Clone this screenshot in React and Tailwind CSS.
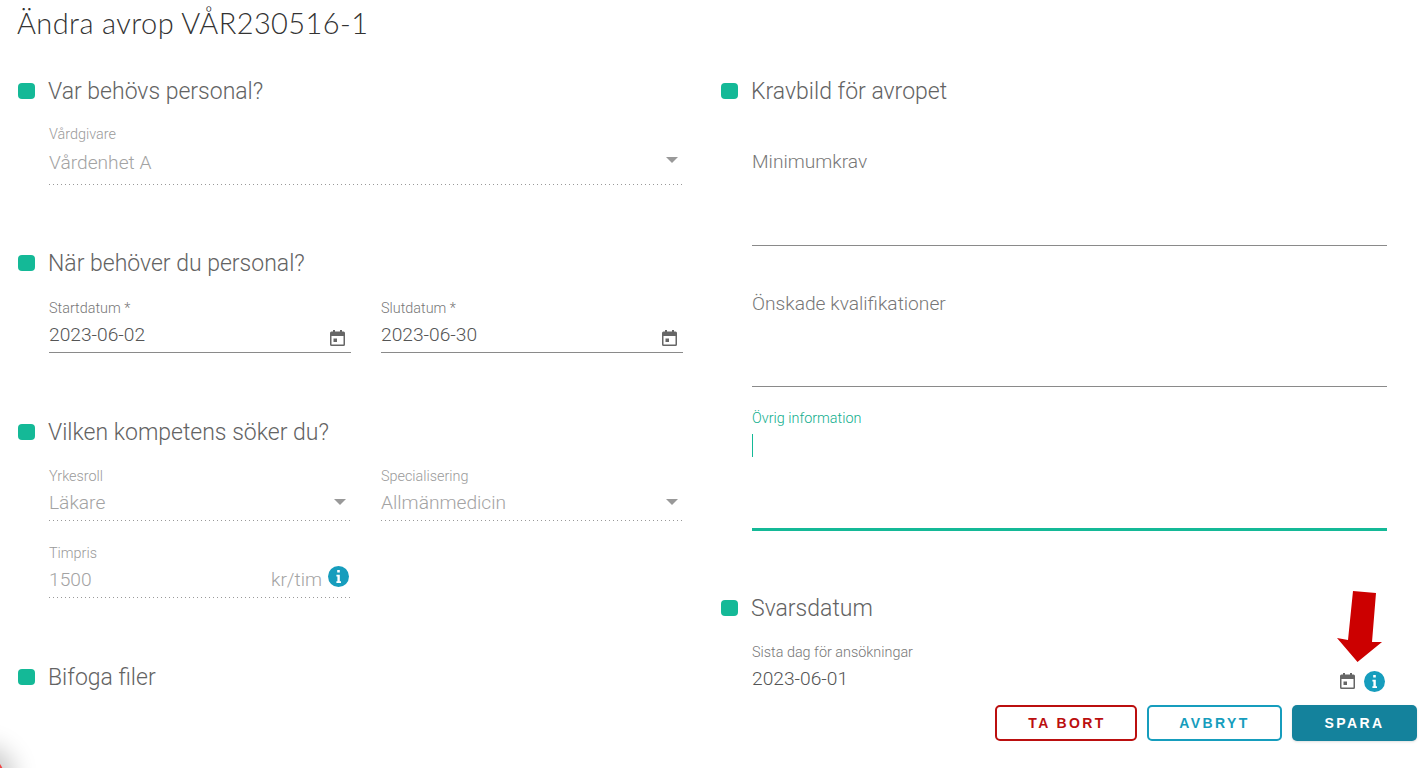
import clsx from "clsx";

const Heading = ({ children, className = "" }) => (
    <div className={`flex items-center h-[32px] ${className}`}>
        <span className="w-[17px] h-[16px] rounded-[4px] bg-[#14b997] shrink-0" />
        <h2 className="ml-[13px] pt-[2px] text-[23px] leading-[32px] font-light text-[#636363]">{children}</h2>
    </div>
);

const CalendarIcon = () => (
    <svg width="15" height="16" viewBox="0 0 15 16" className="text-[#666]">
        <path
            fill="currentColor"
            d="M3 0h2v1.500h5V0h2v1.500h1.500A1.500 1.500 0 0 1 15 3v11.500a1.500 1.500 0 0 1-1.500 1.500h-12A1.500 1.500 0 0 1 0 14.500V3a1.500 1.500 0 0 1 1.500-1.500H3V0Zm-1.500 6v8.500h12V6h-12ZM3.500 8.500h3.500V12H3.500V8.500Z"
        />
    </svg>
);

const InfoDot = () => (
    <span className="w-[21px] h-[21px] rounded-full bg-[#169dbd] flex items-center justify-center">
        <svg width="5" height="13" viewBox="0 0 5 13">
            <path fill="white" d="M1.200 0h2.600v2.600H1.200V0ZM.4 4.800h3.400v6.400H5V13H.4v-1.800h1V6.600h-1V4.800Z" />
        </svg>
    </span>
);

const Caret = ({ className }) => (
    <span className={clsx("mr-[5px] w-0 h-0 border-x-[6px] border-x-transparent border-t-[6px] border-t-[#999]", className)} />
);

// disabled field with dotted underline
const ReadonlyField = ({ label, value, right, tall }) => (
    <div
        className={clsx(
            "bg-[linear-gradient(to_right,#999_1px,transparent_1px)] bg-[length:4px_1px] bg-[position:left_bottom] bg-repeat-x",
            tall ? "h-[59px]" : "h-[53px]"
        )}
    >
        <label className="block h-[16px] pt-px text-[14.400px] leading-[16px] font-light text-[#9a9a9a]">{label}</label>
        <div className={clsx("flex items-center justify-between", tall ? "h-[41px] pb-px" : "h-[36px]")}>
            <span className="pt-[2px] text-[19.200px] leading-[26px] font-light text-[#a3a3a3]">{value}</span>
            {right}
        </div>
    </div>
);

const DateField = ({ label, value }) => (
    <div className="h-[53px] border-b border-[#8a8a8a]">
        <label className="block h-[16px] pt-px text-[14.400px] leading-[16px] font-light text-[#777]">{label}</label>
        <div className="flex items-center justify-between h-[36px]">
            <span className="pt-[2px] text-[19.200px] leading-[26px] font-light text-[#555]">{value}</span>
            <span className="mr-[6px] mt-[8px]"><CalendarIcon /></span>
        </div>
    </div>
);

const TextArea = ({ label, className }) => (
    <div className={clsx("border-b border-[#8a8a8a]", className)}>
        <span className="block text-[19.200px] leading-[26px] font-light text-[#777]">{label}</span>
    </div>
);

export default function App() {
    return (
        <div className="relative h-[768px] w-full overflow-hidden bg-white font-['Roboto',sans-serif]">
            <h1 className="pl-[17px] pt-[4px] h-[75px] text-[29px] leading-[38px] font-light text-[#333] font-['Lato',sans-serif] tracking-[0.4px]">
                Ändra avrop VÅR230516-1
            </h1>

            <div className="flex pl-[18px]">
                {/* left column */}
                <div className="w-[665px]">
                    <Heading>Var behövs personal?</Heading>
                    <div className="pl-[31px] pt-[19px]">
                        <ReadonlyField tall label="Vårdgivare" value="Vårdenhet A" right={<Caret className="mt-[-4px]" />} />
                    </div>

                    <Heading className="mt-[62px]">När behöver du personal?</Heading>
                    <div className="pl-[31px] pt-[21px] grid grid-cols-2 gap-x-[30px]">
                        <DateField label="Startdatum *" value="2023-06-02" />
                        <DateField label="Slutdatum *" value="2023-06-30" />
                    </div>

                    <Heading className="mt-[63px]">Vilken kompetens söker du?</Heading>
                    <div className="pl-[31px] pt-[20px] grid grid-cols-2 gap-x-[30px] gap-y-[24px]">
                        <ReadonlyField label="Yrkesroll" value="Läkare" right={<Caret />} />
                        <ReadonlyField label="Specialisering" value="Allmänmedicin" right={<Caret />} />
                        <ReadonlyField
                            label="Timpris"
                            value="1500"
                            right={
                                <span className="flex items-center gap-[6px] mr-[2px]">
                                    <span className="pt-[2px] text-[19.200px] leading-[26px] font-light text-[#a3a3a3]">kr/tim</span>
                                    <span className="mt-[-5px]"><InfoDot /></span>
                                </span>
                            }
                        />
                    </div>

                    <Heading className="mt-[63px]">Bifoga filer</Heading>
                </div>

                {/* right column */}
                <div className="ml-[38px] w-[666px]">
                    <Heading>Kravbild för avropet</Heading>
                    <div className="pl-[31px]">
                        <TextArea label="Minimumkrav" className="h-[139px] pt-[42px]" />
                        <TextArea label="Önskade kvalifikationer" className="h-[141px] pt-[45px]" />
                        <div className="mt-[23px] h-[121px] border-b-[3px] border-[#14b997]">
                            <label className="block h-[16px] pt-px text-[14.400px] leading-[16px] font-light text-[#0fae8d]">Övrig information</label>
                            <div className="mt-[8px] w-px h-[23px] bg-[#14b997]" />
                        </div>
                    </div>
                    <Heading className="mt-[61px]">Svarsdatum</Heading>
                    <div className="pl-[31px] pt-[20px]">
                        <label className="block h-[16px] pt-px text-[14.400px] leading-[16px] font-light text-[#777]">Sista dag för ansökningar</label>
                        <div className="flex items-center justify-between h-[36px]">
                            <span className="pt-[2px] text-[19.200px] leading-[26px] font-light text-[#555]">2023-06-01</span>
                            <span className="flex items-center gap-[9px] mr-[2px] mt-[6px]">
                                <CalendarIcon />
                                <InfoDot />
                            </span>
                        </div>
                    </div>
                </div>
            </div>

            {/* action buttons float over the form */}
            <div className="absolute left-[995px] top-[705px] flex gap-[10px] font-['Liberation_Sans',sans-serif] text-[14px] font-bold tracking-[2.4px]">
                <button className="w-[142px] h-[36px] pl-[2px] pt-px rounded-[5px] border-2 border-[#bb0f0f] text-[#bb0f0f] bg-white">TA BORT</button>
                <button className="w-[135px] h-[36px] pt-px rounded-[5px] border-2 border-[#169dbd] text-[#169dbd] bg-white">AVBRYT</button>
                <button className="w-[125px] h-[36px] pt-px rounded-[5px] bg-[#14829c] text-white shadow-sm">SPARA</button>
            </div>

            {/* annotation arrow */}
            <svg className="absolute left-[1336px] top-[590px]" width="48" height="74" viewBox="0 0 48 74">
                <path fill="#cc0000" d="M17 1L40 3 36 52 46 52 21.500 72 1 48 12 50Z" />
            </svg>

            {/* corner of a red blob, cropped */}
            <div className="absolute left-[-36px] top-[756px] w-[40px] h-[40px] rounded-full bg-[#ef4444] shadow-[0_0_24px_10px_rgba(0,0,0,0.22)]" />
        </div>
    );
}
